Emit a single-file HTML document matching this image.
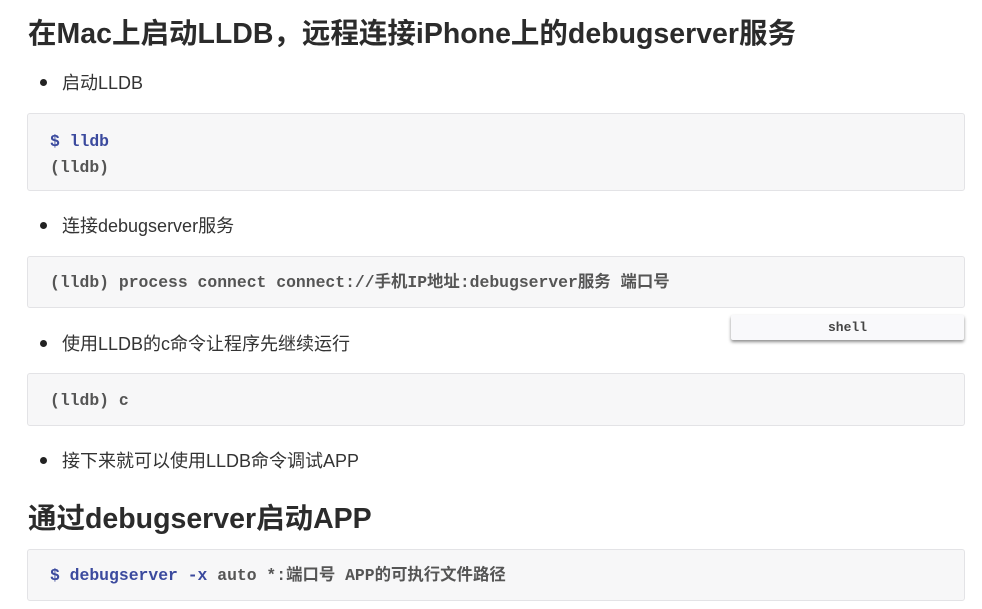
<!DOCTYPE html>
<html><head><meta charset="utf-8"><style>
body{margin:0;width:982px;height:609px;background:#fff;font-family:"Liberation Sans","Noto Sans CJK SC",sans-serif;color:#333;position:relative;overflow:hidden}
.a{position:absolute}
h1{position:absolute;margin:0;font-size:28.5px;font-weight:bold;color:#2b2b2b;left:28px;white-space:nowrap}
.li{position:absolute;left:40px;font-size:18px;color:#333;white-space:nowrap}
.li:before{content:"";display:inline-block;width:7px;height:7px;border-radius:50%;background:#222;margin-right:15px;vertical-align:middle;position:relative;top:-2px}
.code{position:absolute;left:27px;width:938px;background:#f7f7f8;border:1px solid #e3e3e6;border-radius:3px;font-family:"Liberation Mono","Noto Sans CJK SC",monospace;font-size:16.4px;font-weight:bold;color:#555;box-sizing:border-box;padding-left:22px;white-space:pre}
.b{color:#3b4a9e}
</style></head><body>
<h1 style="top:11px">在Mac上启动LLDB，远程连接iPhone上的debugserver服务</h1>
<div class="li" style="top:69px">启动LLDB</div>
<div class="code" style="top:113px;height:78px;padding-top:15px;line-height:26px"><span class="b">$ lldb</span>
(lldb)</div>
<div class="li" style="top:212px">连接debugserver服务</div>
<div class="code" style="top:256px;height:52px;line-height:52px">(lldb) process connect connect://手机IP地址:debugserver服务 端口号</div>
<div class="a" style="left:731px;top:315px;width:233px;height:25px;background:#f9f9fb;border-radius:2px;box-shadow:0 2px 3px rgba(0,0,0,.45);font-family:'Liberation Mono',monospace;font-size:13px;font-weight:bold;color:#444;text-align:center;line-height:25px">shell</div>
<div class="li" style="top:330px">使用LLDB的c命令让程序先继续运行</div>
<div class="code" style="top:373px;height:53px;line-height:53px">(lldb) c</div>
<div class="li" style="top:447px">接下来就可以使用LLDB命令调试APP</div>
<h1 style="top:496px">通过debugserver启动APP</h1>
<div class="code" style="top:549px;height:52px;line-height:52px"><span class="b">$ debugserver -x</span> auto *:端口号 APP的可执行文件路径</div>
</body></html>
